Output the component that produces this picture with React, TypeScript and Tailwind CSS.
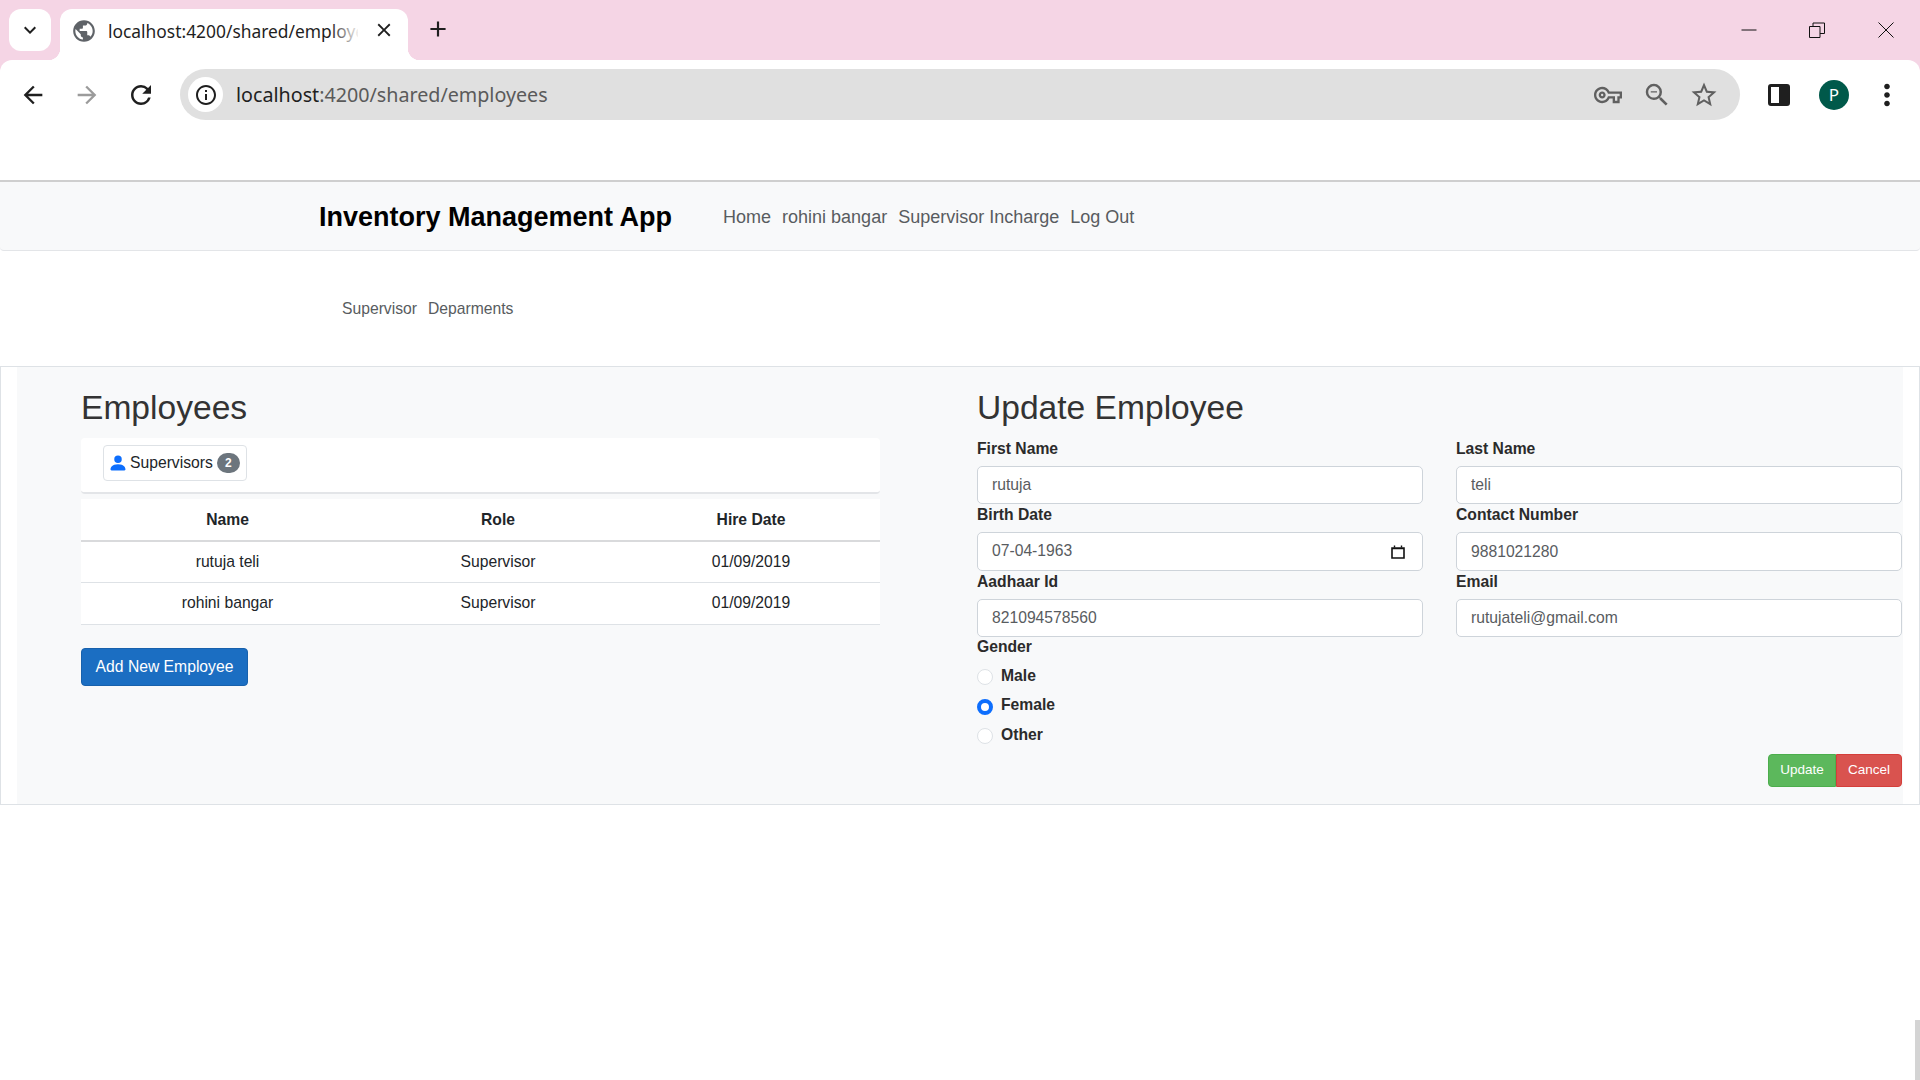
import React from 'react';
import { BsPersonFill } from 'react-icons/bs';
import {
  MdAdd,
  MdArrowBack,
  MdArrowForward,
  MdClose,
  MdInfoOutline,
  MdKeyboardArrowDown,
  MdMoreVert,
  MdOutlineVpnKey,
  MdPublic,
  MdRefresh,
  MdStarBorder,
  MdZoomOut,
} from 'react-icons/md';

const BrowserChrome: React.FC = () => (
  <div className="bg-[#f5d5e5]">
    {/* tab strip */}
    <div className="h-[60px] flex items-start pt-[9px] pl-[9px]">
      <div className="w-[42px] h-[42px] bg-white rounded-[12px] flex items-center justify-center">
        <MdKeyboardArrowDown className="text-[24px] text-[#1f1f1f]" />
      </div>
      <div className="relative ml-[9px] w-[348px] h-[51px] bg-white rounded-t-[12px] flex items-center pb-[7px] pl-[11px]">
        <span className="absolute -left-[12px] bottom-0 w-[12px] h-[12px] bg-[radial-gradient(circle_at_0_0,#f5d5e5_12px,#ffffff_12.5px)]" />
        <span className="absolute -right-[12px] bottom-0 w-[12px] h-[12px] bg-[radial-gradient(circle_at_100%_0,#f5d5e5_12px,#ffffff_12.5px)]" />
        <MdPublic className="text-[26px] text-[#5f6368] shrink-0" />
        <span className="ml-[11px] w-[250px] overflow-hidden whitespace-nowrap text-[17.4px] text-[#1f1f1f] font-['Noto_Sans',sans-serif]">
          localhost:4200/shared/employees
        </span>
        <span className="absolute left-[270px] top-0 w-[30px] h-full bg-gradient-to-r from-transparent to-white" />
        <MdClose className="absolute left-[313px] top-[10px] text-[22px] text-[#1f1f1f]" />
      </div>
      <MdAdd className="ml-[17px] mt-[7px] text-[26px] text-[#1f1f1f]" />
      <div className="ml-auto -mt-[9px] h-[60px] flex items-center">
        <svg width="16" height="16" viewBox="0 0 16 16" className="mr-[52px] -mt-[1px]">
          <path d="M0.5 8h15" stroke="#111" strokeWidth="1" />
        </svg>
        <svg width="16" height="16" viewBox="0 0 16 16" className="mr-[53px] -mt-[1px]">
          <path d="M0.5 4.5h10.5v11H0.5zM4 4.5V1h11.5v10.5H11" fill="none" stroke="#111" strokeWidth="1" />
        </svg>
        <svg width="16" height="16" viewBox="0 0 16 16" className="mr-[26px] -mt-[1px]">
          <path d="M0.5 0.5l15 15M15.5 0.5l-15 15" stroke="#111" strokeWidth="1" />
        </svg>
      </div>
    </div>

    {/* toolbar */}
    <div className="h-[60px] bg-white rounded-t-[12px] flex items-start pt-[9px]">
      <MdArrowBack className="ml-[19px] mt-[12px] text-[28px] text-[#1f1f1f]" />
      <MdArrowForward className="ml-[26px] mt-[12px] text-[28px] text-[#9b9b9b]" />
      <MdRefresh className="ml-[25px] mt-[11px] text-[30px] text-[#1f1f1f]" />
      <div className="ml-[24px] w-[1560px] h-[51px] bg-[#e0e0e0] rounded-full flex items-center pl-[8px]">
        <div className="w-[35px] h-[35px] rounded-full bg-white flex items-center justify-center">
          <MdInfoOutline className="text-[24px] text-[#1f1f1f]" />
        </div>
        <span className="ml-[13px] text-[19.7px] text-[#1f1f1f] font-['Noto_Sans',sans-serif]">
          localhost<span className="text-[#5a5a5a]">:4200/shared/employees</span>
        </span>
        <MdOutlineVpnKey className="ml-auto text-[28px] text-[#606060]" />
        <MdZoomOut className="ml-[20px] text-[30px] text-[#606060]" />
        <MdStarBorder className="ml-[17px] mr-[21px] text-[30px] text-[#606060]" />
      </div>
      <div className="ml-[28px] mt-[15px] w-[22px] h-[22px] rounded-[3px] border-[3px] border-[#1f1f1f] flex">
        <span className="w-1/2 bg-white" />
        <span className="w-1/2 bg-[#1f1f1f]" />
      </div>
      <div className="ml-[29px] mt-[11px] w-[30px] h-[30px] rounded-full bg-[#00594a] flex items-center justify-center text-white text-[17px] font-['Noto_Sans',sans-serif]">
        P
      </div>
      <MdMoreVert className="ml-[21px] mt-[9px] text-[34px] text-[#1f1f1f]" />
    </div>
  </div>
);

const Field: React.FC<{ label: string; value: string; date?: boolean; tall?: boolean }> = ({ label, value, date, tall }) => (
  <div>
    <label className="block h-[28px] leading-[21px] font-bold text-[15.7px] text-[#2b2b2b]">{label}</label>
    {date ? (
      <div className="h-[39px] bg-white border border-[#ced4da] rounded-[5px] pl-[14px] pr-[17px] pb-[2px] flex items-center justify-between text-[15.7px] text-[#595c5f]">
        {value}
        <svg width="14" height="14" viewBox="0 0 14 14" className="mt-[2px]">
          <path d="M1 3h12v10H1zM1 3.5h12" fill="none" stroke="#111" strokeWidth="1.6" />
          <path d="M3.5 0.5v2M10.5 0.5v2" stroke="#111" strokeWidth="1.4" />
        </svg>
      </div>
    ) : (
      <input
        readOnly
        value={value}
        className={
          tall
            ? 'block w-full h-[39px] bg-white border border-[#ced4da] rounded-[5px] px-[14px] text-[15.7px] text-[#595c5f] outline-none'
            : 'block w-full h-[38px] bg-white border border-[#ced4da] rounded-[5px] px-[14px] text-[15.7px] text-[#595c5f] outline-none'
        }
      />
    )}
  </div>
);

const Radio: React.FC<{ label: string; checked?: boolean }> = ({ label, checked }) => (
  <div className="h-[29.5px] flex items-center">
    <span
      className={
        checked
          ? 'w-[16px] h-[16px] rounded-full bg-white border-[4px] border-[#0d6efd] mt-[3px]'
          : 'w-[16px] h-[16px] rounded-full bg-white border border-[#dee2e6] mt-[3px]'
      }
    />
    <span className="ml-[8px] font-bold text-[15.7px] text-[#2b2b2b]">{label}</span>
  </div>
);

const employees = [
  { name: 'rutuja teli', role: 'Supervisor', hired: '01/09/2019' },
  { name: 'rohini bangar', role: 'Supervisor', hired: '01/09/2019' },
];

const App: React.FC = () => {
  return (
    <div className="relative w-[1920px] h-[1080px] overflow-hidden bg-white font-['Liberation_Sans',Arial,sans-serif]">
      <BrowserChrome />

      <div className="h-[60px]" />

      <nav className="h-[71px] pt-[2px] bg-[#f8f9fa] border-t-2 border-t-[#cfcfcf] border-b border-b-[#e3e5e8] rounded-b-[4px] flex items-center pl-[319px]">
        <span className="font-bold text-[27px] text-black">Inventory Management App</span>
        <div className="ml-[51px] pt-[1px] flex gap-[11px] text-[18px] text-[#585c60]">
          <a>Home</a>
          <a>rohini bangar</a>
          <a>Supervisor Incharge</a>
          <a>Log Out</a>
        </div>
      </nav>

      <div className="h-[115px] flex items-center pl-[342px] gap-[11px] text-[15.7px] text-[#585c60]">
        <a>Supervisor</a>
        <a>Deparments</a>
      </div>

      <main className="h-[439px] border border-[#dee2e6] px-[16px] bg-white">
        <div className="h-full bg-[#f8f9fa] flex">
          <section className="ml-[64px] w-[799px]">
            <h2 className="h-[71px] pt-[16px] leading-[50px] text-[33.6px] text-[#333]">Employees</h2>
            <div className="h-[56px] bg-white border-b-2 border-b-[#e3e5e8] rounded-[4px] pl-[22px] pt-[7px]">
              <div className="w-[144px] h-[36px] border border-[#dee2e6] rounded-[4px] flex items-center pl-[4px] text-[15.7px] text-[#212529]">
                <BsPersonFill className="text-[20px] text-[#0d6efd]" />
                <span className="ml-[2px]">Supervisors</span>
                <span className="ml-[4px] w-[23px] h-[20px] rounded-full bg-[#6c757d] text-white text-[12px] font-bold flex items-center justify-center">
                  2
                </span>
              </div>
            </div>
            <table className="mt-[5px] w-full bg-white text-[15.7px] text-[#212529] text-center table-fixed">
              <thead>
                <tr className="h-[42px] border-b-2 border-b-[#d9dadc]">
                  <th className="w-[293px] font-bold">Name</th>
                  <th className="w-[248px] font-bold">Role</th>
                  <th className="font-bold">Hire Date</th>
                </tr>
              </thead>
              <tbody>
                {employees.map((employee) => (
                  <tr key={employee.name} className="h-[41.5px] border-b border-b-[#dee2e6]">
                    <td>{employee.name}</td>
                    <td>{employee.role}</td>
                    <td>{employee.hired}</td>
                  </tr>
                ))}
              </tbody>
            </table>
            <button className="mt-[23px] w-[167px] h-[38px] bg-[#1b6ec2] border border-[#1861ac] rounded-[4px] text-white text-[15.7px]">
              Add New Employee
            </button>
          </section>

          <section className="ml-[97px] w-[925px]">
            <h2 className="h-[71px] pt-[16px] leading-[50px] text-[33.6px] text-[#333]">Update Employee</h2>
            <div className="grid grid-cols-[446px_446px] gap-x-[33px]">
              <Field label="First Name" value="rutuja" />
              <Field label="Last Name" value="teli" />
              <Field label="Birth Date" value="07-04-1963" date />
              <Field label="Contact Number" value="9881021280" tall />
              <Field label="Aadhaar Id" value="821094578560" />
              <Field label="Email" value="rutujateli@gmail.com" />
            </div>
            <div className="h-[24px] leading-[20px] font-bold text-[15.7px] text-[#2b2b2b]">Gender</div>
            <Radio label="Male" />
            <Radio label="Female" checked />
            <Radio label="Other" />
            <div className="mt-[4px] flex justify-end">
              <button className="w-[68px] h-[33px] bg-[#5cb85c] border border-[#4cae4c] rounded-l-[4px] text-white text-[13.5px]">
                Update
              </button>
              <button className="w-[66px] h-[33px] bg-[#d9534f] border border-[#d43f3a] rounded-r-[4px] text-white text-[13.5px]">
                Cancel
              </button>
            </div>
          </section>
        </div>
      </main>

      {/* page scrollbar thumb */}
      <div className="absolute right-0 bottom-0 w-[5px] h-[60px] bg-[#d4d4d4]" />
    </div>
  );
};

export default App;
